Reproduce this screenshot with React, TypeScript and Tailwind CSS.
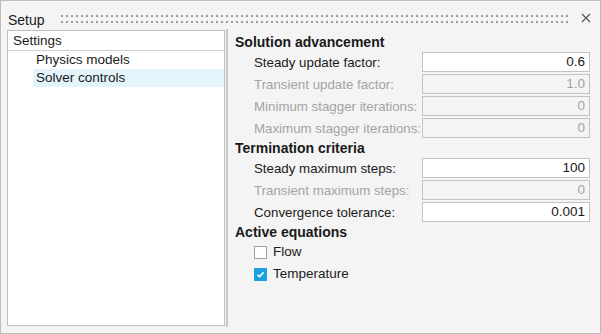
import React from "react";

type Field = { label: string; value: string; disabled?: boolean };

const solution: Field[] = [
	{ label: "Steady update factor:", value: "0.6" },
	{ label: "Transient update factor:", value: "1.0", disabled: true },
	{ label: "Minimum stagger iterations:", value: "0", disabled: true },
	{ label: "Maximum stagger iterations:", value: "0", disabled: true },
];

const termination: Field[] = [
	{ label: "Steady maximum steps:", value: "100" },
	{ label: "Transient maximum steps:", value: "0", disabled: true },
	{ label: "Convergence tolerance:", value: "0.001" },
];

function Heading({ children }: { children: React.ReactNode }) {
	return (
		<div className="h-[18px] flex items-center pt-[1px] font-bold text-[14px] text-[#1a1a1a]">
			{children}
		</div>
	);
}

function FieldRow({ label, value, disabled }: Field) {
	return (
		<div className="h-[22px] flex items-center pl-[19px]">
			<span
				className={`w-[168px] whitespace-nowrap text-[13.3px] pt-[1px] ${
					disabled ? "text-[#a3a3a3]" : "text-[#1a1a1a]"
				}`}
			>
				{label}
			</span>
			<div
				className={`w-[168px] h-[20px] border border-[#c3c3c3] flex items-center justify-end pr-[4px] text-[13.5px] ${
					disabled ? "bg-[#f4f4f4] text-[#a3a3a3]" : "bg-white text-[#1a1a1a]"
				}`}
			>
				{value}
			</div>
		</div>
	);
}

function CheckRow({ label, checked }: { label: string; checked?: boolean }) {
	return (
		<div className="h-[22px] flex items-center pl-[19px] gap-[6px]">
			{checked ? (
				<span className="w-[13px] h-[13px] bg-[#1ba1e2] flex items-center justify-center">
					<svg width="9" height="9" viewBox="0 0 9 9">
						<path d="M1.5 4.8 L3.6 6.7 L7.5 2.4" fill="none" stroke="#fff" strokeWidth="1.6" />
					</svg>
				</span>
			) : (
				<span className="w-[13px] h-[13px] bg-white border border-[#a0a0a0]" />
			)}
			<span className="text-[13.5px] pt-[1px] text-[#1a1a1a]">{label}</span>
		</div>
	);
}

function DotHandle() {
	return (
		<svg className="flex-1 h-[8px] mt-[14px]">
			<defs>
				<pattern id="dots" width="5" height="6" patternUnits="userSpaceOnUse">
					<rect x="0" y="0" width="2" height="2" fill="#9c9c9c" />
				</pattern>
			</defs>
			<rect x="0" y="0" width="100%" height="8" fill="url(#dots)" />
		</svg>
	);
}

export default function App() {
	return (
		<div
			className="w-[601px] h-[334px] border border-[#bdbdbd] bg-[#f4f4f4] flex flex-col"
			style={{ fontFamily: '"Liberation Sans", Arial, sans-serif' }}
		>
			{/* title bar */}
			<div className="h-[30px] flex items-start pl-[7px] pr-[9px]">
				<span className="pt-[11px] text-[14px] leading-[16px] text-[#1a1a1a] mr-[16px]">Setup</span>
				<DotHandle />
				<svg className="ml-[10px] mt-[12px]" width="10" height="10" viewBox="0 0 10 10">
					<path d="M1 1 L9 9 M9 1 L1 9" stroke="#555" strokeWidth="1.2" />
				</svg>
			</div>

			<div className="flex flex-1 pl-[6px] pb-[6px]">
				{/* tree */}
				<div className="w-[218px] h-[296px] bg-white border border-[#c0c0c0] flex flex-col">
					<div className="h-[20px] border-b border-[#cfcfcf] flex items-center pl-[5px] pt-[1px] text-[13.5px] text-[#1a1a1a]">
						Settings
					</div>
					<div className="h-[18px] flex items-center ml-[25px] pl-[3px] pt-[1px] text-[13.5px] text-[#1a1a1a]">
						Physics models
					</div>
					<div className="h-[18px] flex items-center ml-[25px] pl-[3px] pt-[1px] text-[13.5px] text-[#1a1a1a] bg-[#e3f4fb]">
						Solver controls
					</div>
				</div>

				{/* splitter */}
				<div className="ml-[1px] w-[2px] -mt-[1px] h-[298px] bg-[#c8c8c8]" />

				{/* settings */}
				<div className="flex-1 flex flex-col pl-[7px] pt-[3px]">
					<Heading>Solution advancement</Heading>
					{solution.map((f) => (
						<FieldRow key={f.label} {...f} />
					))}
					<Heading>Termination criteria</Heading>
					{termination.map((f) => (
						<FieldRow key={f.label} {...f} />
					))}
					<Heading>Active equations</Heading>
					<CheckRow label="Flow" />
					<CheckRow label="Temperature" checked />
				</div>
			</div>
		</div>
	);
}
